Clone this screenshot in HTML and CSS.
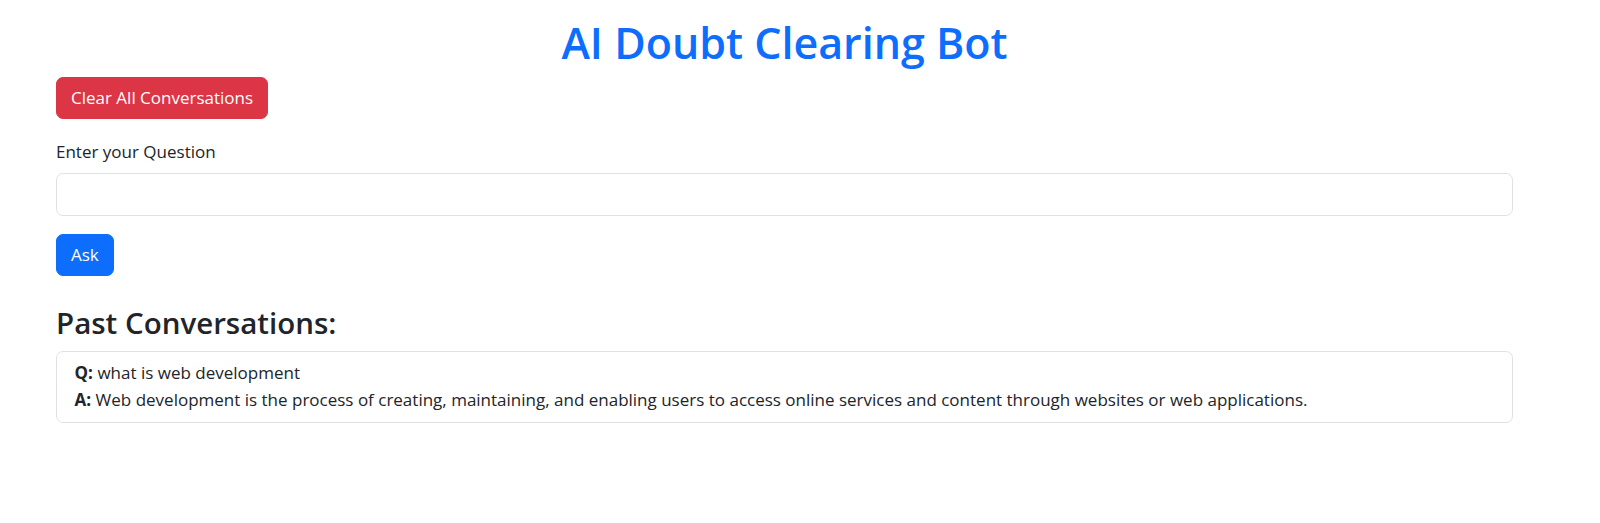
FILE: index.html
```html
<!DOCTYPE html>
<html lang="en">
<head>
<meta charset="utf-8">
<title>AI Doubt Clearing Bot</title>
<link rel="stylesheet" href="styles.css">
</head>
<body>
<div class="container">
  <h1 class="title">AI Doubt Clearing Bot</h1>
  <button class="btn btn-danger">Clear All Conversations</button>
  <form class="ask-form">
    <label class="form-label" for="q">Enter your Question</label>
    <input class="form-control" id="q" type="text">
    <button class="btn btn-primary" type="button">Ask</button>
  </form>
  <h3 class="section-title">Past Conversations:</h3>
  <div class="list-item">
    <div class="line"><strong>Q:</strong> what is web development</div>
    <div class="line"><strong>A:</strong> Web development is the process of creating, maintaining, and enabling users to access online services and content through websites or web applications.</div>
  </div>
</div>
</body>
</html>
```
FILE: styles.css
```css
* { box-sizing: border-box; }
body {
  margin: 0;
  background: #fff;
  color: #212529;
  font-family: "Open Sans", "Noto Sans", sans-serif;
  font-size: 17px;
  line-height: 26.4px;
}
.container {
  width: 1457px;
  margin-left: 56px;
  padding-top: 16.5px;
}
.title {
  margin: 0 0 8.8px;
  text-align: center;
  color: #0d6efd;
  font-size: 43px;
  font-weight: 600;
  line-height: 1.2;
}
.btn {
  display: inline-block;
  font-family: inherit;
  font-size: 17px;
  line-height: 26.4px;
  padding: 6.8px 14px;
  border: 1px solid transparent;
  border-radius: 7px;
  color: #fff;
  cursor: pointer;
}
.btn-danger { background: #dc3545; border-color: #dc3545; }
.btn-primary { background: #0d6efd; border-color: #0d6efd; }
.ask-form {
  display: flex;
  flex-direction: column;
  align-items: flex-start;
  margin-top: 20px;
}
.form-label { margin-bottom: 8px; }
.form-control {
  width: 100%;
  height: 43px;
  border: 1px solid #dee2e6;
  border-radius: 7px;
  padding: 6.8px 13.2px;
  font-family: inherit;
  font-size: 17px;
  margin-bottom: 18px;
}
.section-title {
  margin: 28.4px 0 10.6px;
  font-size: 29.5px;
  font-weight: 600;
  line-height: 1.2;
}
.list-item {
  border: 1px solid #dee2e6;
  border-radius: 7px;
  padding: 8.8px 17.6px;
}
.line strong { font-weight: 700; }
```
